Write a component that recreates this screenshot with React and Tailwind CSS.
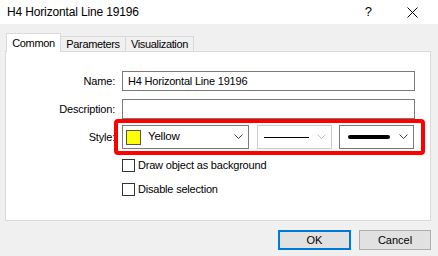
import React from "react";

const font = { fontFamily: '"Liberation Sans", Arial, sans-serif' };

function Chevron({ color = "#404040" }) {
  return (
    <svg width="9" height="6" viewBox="0 0 9 6" className="shrink-0">
      <path d="M0.5 0.5 L4.5 4.5 L8.5 0.5" fill="none" stroke={color} strokeWidth="1" />
    </svg>
  );
}

function Checkbox({ label }) {
  return (
    <label className="flex items-center gap-[3px] h-[13px]">
      <span className="w-[13px] h-[13px] border border-[#333] bg-white shrink-0" />
      <span className="text-[11px] tracking-[-0.2px] text-black leading-none">{label}</span>
    </label>
  );
}

export default function App() {
  return (
    <div className="w-[438px] h-[256px] bg-[#f0f0f0] relative overflow-hidden text-black" style={font}>
      {/* title bar */}
      <div className="h-[24px] bg-white flex items-center pl-[7px] pr-[20px]">
        <span className="text-[12px] tracking-[-0.15px] flex-1">H4 Horizontal Line 19196</span>
        <span className="text-[13px] mr-[35px]">?</span>
        <svg width="11" height="11" viewBox="0 0 11 11">
          <path d="M0.5 0.5 L10.5 10.5 M10.5 0.5 L0.5 10.5" stroke="#000" strokeWidth="1" />
        </svg>
      </div>

      {/* tabs */}
      <div className="pl-[6px] flex items-end h-[27px] relative z-10 text-[11px] tracking-[-0.35px]">
        <div className="h-[19px] w-[55px] justify-center bg-white border border-b-0 border-[#d9d9d9] flex items-center -mb-px">Common</div>
        <div className="h-[15px] w-[65px] justify-center border-t border-r border-[#d9d9d9] flex items-center">Parameters</div>
        <div className="h-[15px] w-[68px] justify-center border-t border-r border-[#d9d9d9] flex items-center">Visualization</div>
      </div>

      {/* panel */}
      <div className="ml-[5px] w-[426px] h-[170px] bg-white border border-[#d9d9d9] pt-[19px] flex flex-col text-[11px] tracking-[-0.2px]">
        <div className="flex items-center h-[20px]">
          <div className="w-[110px] text-right pr-[1px]">Name:</div>
          <div className="ml-[6px] w-[293px] h-[20px] border border-[#7a7a7a] flex items-center pl-[5px]">H4 Horizontal Line 19196</div>
        </div>
        <div className="flex items-center h-[20px] mt-[8px]">
          <div className="w-[110px] text-right pr-[1px]">Description:</div>
          <div className="ml-[6px] w-[293px] h-[20px] border border-[#7a7a7a]" />
        </div>
        <div className="flex items-center h-[24px] mt-[6px]">
          <div className="w-[110px] text-right pr-[1px]">Style:</div>
          <div className="ml-[6px] w-[127px] h-[24px] border border-[#7a7a7a] flex items-center pl-[3px] pr-[5px]">
            <span className="w-[15px] h-[15px] bg-[#ffff00] border border-[#555] shrink-0" />
            <span className="ml-[7px] flex-1 text-[11.5px]">Yellow</span>
            <Chevron />
          </div>
          <div className="ml-[8px] w-[75px] h-[24px] border border-[#cccccc] flex items-center pl-[6px] pr-[5px]">
            <span className="w-[45px] h-px bg-black" />
            <span className="flex-1" />
            <Chevron color="#c0c0c0" />
          </div>
          <div className="ml-[7px] w-[75px] h-[24px] border border-[#7a7a7a] flex items-center pl-[8px] pr-[5px]">
            <span className="w-[42px] h-[4px] bg-black rounded-full" />
            <span className="flex-1" />
            <Chevron />
          </div>
        </div>
        <div className="ml-[116px] mt-[10px] flex flex-col gap-[11px]">
          <Checkbox label="Draw object as background" />
          <Checkbox label="Disable selection" />
        </div>
      </div>

      {/* buttons */}
      <div className="flex justify-end gap-[8px] pr-[7px] mt-[9px]">
        <button className="w-[73px] h-[20px] bg-[#e1e1e1] border-2 border-[#0078d7] text-[11px]">OK</button>
        <button className="w-[72px] h-[20px] bg-[#e1e1e1] border border-[#adadad] text-[11px]">Cancel</button>
      </div>

      {/* red highlight annotation */}
      <div className="absolute left-[114px] top-[119px] w-[311px] h-[36px] border-[4px] border-[#ff0000] rounded-[4px] pointer-events-none" />
    </div>
  );
}
